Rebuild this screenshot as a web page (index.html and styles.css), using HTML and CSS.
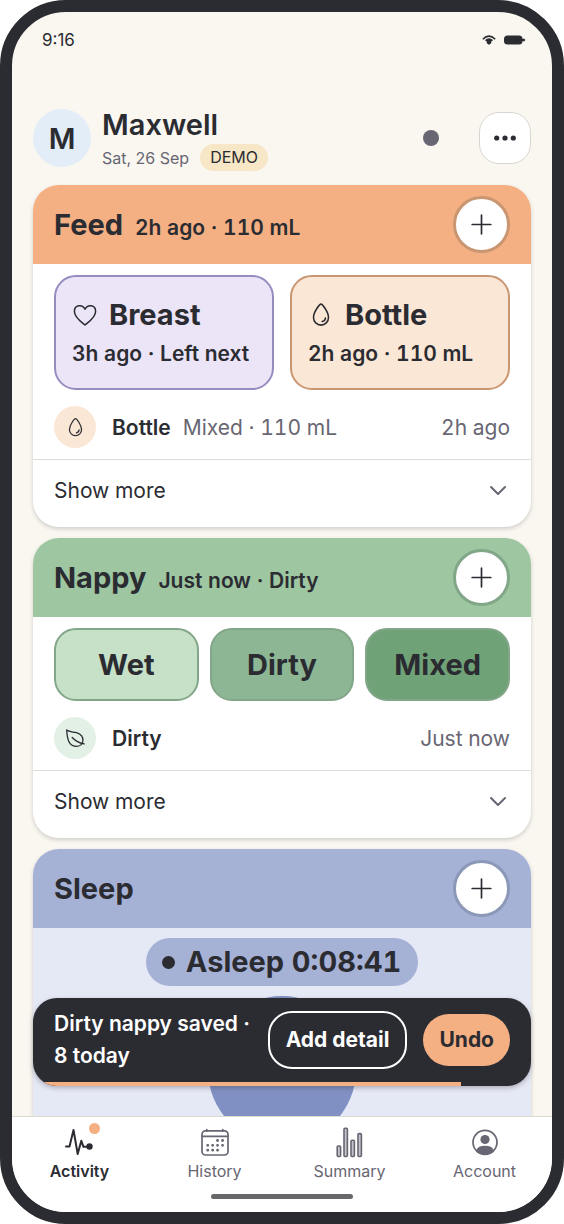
FILE: index.html
```html
<!DOCTYPE html>
<html lang="en-GB">
<head>
<meta charset="utf-8">
<meta name="viewport" content="width=device-width, initial-scale=1">
<title>Maxwell – Activity</title>
<link rel="stylesheet" href="styles.css">
</head>
<body>
<svg class="defs" width="0" height="0" aria-hidden="true">
  <symbol id="plus" viewBox="0 0 21 21"><path d="M10.500 1.200v18.600M1.200 10.500h18.600" fill="none" stroke="currentColor" stroke-width="1.700" stroke-linecap="round"/></symbol>
  <symbol id="chevron" viewBox="0 0 24 24"><path d="M5 8l7 7 7-7" fill="none" stroke="currentColor" stroke-width="2" stroke-linecap="round" stroke-linejoin="round"/></symbol>
  <symbol id="drop" viewBox="-1.500 -1 27 27"><path d="M12 1.200C10.500 1.200 4.200 9.400 4.200 15.200a7.800 7.800 0 0 0 15.600 0C19.800 9.400 13.500 1.200 12 1.200z" fill="none" stroke="currentColor" stroke-width="1.600"/><path d="M16.600 15.600a4 4 0 0 1-3.400 3.700" fill="none" stroke="currentColor" stroke-width="1.600" stroke-linecap="round"/></symbol>
</svg>
<div class="phone">
  <div class="status">
    <span class="clock">9:16</span>
    <span class="status-icons">
      <svg width="14" height="10" viewBox="0 0 14 10" aria-hidden="true"><path d="M0.800 4.200Q7-2 13.200 4.200" fill="none" stroke="currentColor" stroke-width="1.600"/><path d="M2.800 5.200Q7 1.200 11.200 5.200L9.500 6.200 9 8.500 7 9.800 5 8.500 4.500 6.200z" fill="currentColor"/></svg>
      <svg width="22" height="10" viewBox="0 0 22 10" aria-hidden="true"><rect x="0" y="0.500" width="18.500" height="9" rx="3.500" fill="currentColor"/><path d="M18 4h1.500V3l2 2-2 2V6H18z" fill="currentColor"/></svg>
    </span>
  </div>

  <main class="content">
    <header class="profile">
      <div class="avatar" aria-hidden="true">M</div>
      <div class="who">
        <h1 class="name">Maxwell</h1>
        <div class="meta"><span class="date">Sat, 26 Sep</span><span class="badge">DEMO</span></div>
      </div>
      <span class="sync"></span>
      <button class="more" type="button" aria-label="More">
        <svg width="24" height="6" viewBox="0 0 24 6" fill="currentColor" aria-hidden="true"><circle cx="3.700" cy="3" r="2.600"/><circle cx="12" cy="3" r="2.600"/><circle cx="20.300" cy="3" r="2.600"/></svg>
      </button>
    </header>

    <section class="card feed">
      <div class="card-head">
        <h2 class="title">Feed</h2><span class="summary">2h ago · 110 mL</span>
        <button class="add" type="button" aria-label="Add feed"><svg width="21" height="21" aria-hidden="true"><use href="#plus"/></svg></button>
      </div>
      <div class="choices pair">
        <button class="choice detail breast" type="button">
          <span class="choice-top"><svg width="26" height="26" viewBox="0 0 26 26" aria-hidden="true"><path d="M13 23C10 20.300 2.400 15.500 2.400 9.400 2.400 2.800 10.400 1.800 13 7.300 15.600 1.800 23.600 2.800 23.600 9.400 23.600 15.500 16 20.300 13 23z" fill="none" stroke="currentColor" stroke-width="1.500" stroke-linejoin="round"/></svg><span class="choice-name">Breast</span></span>
          <span class="choice-note">3h ago · Left next</span>
        </button>
        <button class="choice detail bottle" type="button">
          <span class="choice-top"><svg width="26" height="26" aria-hidden="true"><use href="#drop"/></svg><span class="choice-name">Bottle</span></span>
          <span class="choice-note">2h ago · 110 mL</span>
        </button>
      </div>
      <div class="entry">
        <span class="entry-icon"><svg width="21" height="21" aria-hidden="true"><use href="#drop"/></svg></span>
        <span class="entry-name">Bottle</span><span class="entry-note">Mixed · 110 mL</span><span class="entry-time">2h ago</span>
      </div>
      <button class="show-more" type="button"><span>Show more</span><svg width="24" height="24" aria-hidden="true"><use href="#chevron"/></svg></button>
    </section>

    <section class="card nappy">
      <div class="card-head">
        <h2 class="title">Nappy</h2><span class="summary">Just now · Dirty</span>
        <button class="add" type="button" aria-label="Add nappy"><svg width="21" height="21" aria-hidden="true"><use href="#plus"/></svg></button>
      </div>
      <div class="choices trio">
        <button class="choice wet" type="button">Wet</button>
        <button class="choice dirty" type="button">Dirty</button>
        <button class="choice mixed" type="button">Mixed</button>
      </div>
      <div class="entry">
        <span class="entry-icon"><svg width="20" height="20" viewBox="0 0 20 20" fill="none" stroke="currentColor" stroke-width="1.300" stroke-linecap="round" stroke-linejoin="round" aria-hidden="true"><path d="M1.700 2C4 4.200 8 3.700 11.500 4.700 15.800 6 18.300 9 17.900 13c-.4 3.600-3.500 5.500-7 5.300C3.500 17.800 2.200 10.500 1.700 2z"/><path d="M7.200 9.500c2.500 2.800 5.800 5.200 12 6.400"/></svg></span>
        <span class="entry-name">Dirty</span><span class="entry-time">Just now</span>
      </div>
      <button class="show-more" type="button"><span>Show more</span><svg width="24" height="24" aria-hidden="true"><use href="#chevron"/></svg></button>
    </section>

    <section class="card sleep">
      <div class="card-head">
        <h2 class="title">Sleep</h2>
        <button class="add" type="button" aria-label="Add sleep"><svg width="21" height="21" aria-hidden="true"><use href="#plus"/></svg></button>
      </div>
      <div class="sleep-body">
        <div class="timer"><span class="timer-dot"></span>Asleep 0:08:41</div>
        <button class="orb" type="button" aria-label="Stop sleep timer"></button>
      </div>
    </section>

    <div class="toast" role="status">
      <span class="toast-text">Dirty nappy saved · 8 today</span>
      <button class="toast-detail" type="button">Add detail</button>
      <button class="toast-undo" type="button">Undo</button>
      <span class="toast-progress"></span>
    </div>
  </main>

  <nav class="tabs">
    <a class="tab active" href="#activity">
      <span class="tab-icon"><svg width="32" height="32" viewBox="0 0 32 32" fill="none" stroke="currentColor" stroke-width="2" stroke-linecap="round" stroke-linejoin="round" aria-hidden="true"><path d="M3 20.500H6.500L10.500 4l4.200 24L18.300 14.800l2.200 6H26"/><circle cx="26.500" cy="20.500" r="2.200" fill="currentColor"/></svg><span class="dot"></span></span>
      Activity
    </a>
    <a class="tab" href="#history">
      <span class="tab-icon"><svg width="32" height="32" viewBox="0 0 32 32" fill="none" stroke="currentColor" stroke-width="1.700" stroke-linecap="round" aria-hidden="true"><rect x="3" y="4.800" width="26" height="24.200" rx="3.500"/><path d="M3 10.300h26M7.800 3.500v1.500M23.800 3.500v1.500"/><path d="M18.500 14.500h.1M23.500 14.500h.1M8.700 19.300h.1M13.600 19.300h.1M18.500 19.300h.1M23.500 19.300h.1M8.700 24.200h.1M13.600 24.200h.1M18.500 24.200h.1" stroke-width="2.800"/></svg></span>
      History
    </a>
    <a class="tab" href="#summary">
      <span class="tab-icon"><svg width="32" height="32" viewBox="0 0 32 32" fill="#c4c4cc" stroke="currentColor" stroke-width="1.600" aria-hidden="true"><rect x="4.200" y="20" width="3.400" height="10.500" rx="1"/><rect x="11" y="2.300" width="3.400" height="28.200" rx="1"/><rect x="18" y="14.300" width="3.400" height="16.200" rx="1"/><rect x="25" y="7.600" width="3.400" height="22.900" rx="1"/></svg></span>
      Summary
    </a>
    <a class="tab" href="#account">
      <span class="tab-icon"><svg width="32" height="32" viewBox="0 0 32 32" aria-hidden="true"><circle cx="16" cy="16.300" r="12" fill="none" stroke="currentColor" stroke-width="1.700"/><circle cx="16" cy="13.500" r="4.600" fill="currentColor"/><path d="M7.300 24Q9 19.700 16 19.700T24.700 24Q21 28.500 16 28.500T7.300 24z" fill="currentColor"/></svg></span>
      Account
    </a>
    <span class="home-bar"></span>
  </nav>
</div>
</body>
</html>
```
FILE: styles.css
```css
:root {
  --ink: #2b2c32;
  --muted: #686672;
  --cream: #faf7f1;
}

* { box-sizing: border-box; }

body {
  margin: 0;
  background: #fff;
  color: var(--ink);
  font-family: Inter, "Liberation Sans", sans-serif;
  font-size: 21px;
}

button {
  margin: 0;
  padding: 0;
  border: 0;
  background: none;
  color: inherit;
  font: inherit;
  font-variant-numeric: inherit;
}

svg { display: block; flex: none; }
.defs { position: absolute; }

.phone {
  display: flex;
  flex-direction: column;
  height: 100vh;
  overflow: hidden;
  border: 12px solid var(--ink);
  border-radius: 66px;
  background: var(--cream);
}

.status {
  display: flex;
  flex: none;
  align-items: center;
  justify-content: space-between;
  padding: 16px 26px 0 30px;
}

.clock { font-size: 17px; line-height: 24px; }
.status-icons { display: flex; align-items: center; gap: 8px; }

.content {
  position: relative;
  display: flex;
  flex: 1;
  flex-direction: column;
  gap: 11px;
  min-height: 0;
  padding: 53px 21px 0;
  overflow: hidden;
}

.profile {
  display: flex;
  flex: none;
  align-items: center;
  margin-bottom: 3px;
}

.avatar {
  display: grid;
  place-items: center;
  width: 58px;
  height: 58px;
  border-radius: 50%;
  background: #e2edf7;
  font-size: 29px;
  font-weight: 600;
}

.who { flex: 1; margin-left: 11px; }
.name { margin: 0; font-size: 29px; font-weight: 600; line-height: 39px; }
.meta { display: flex; align-items: center; gap: 11px; color: var(--muted); font-size: 16px; }
.badge {
  padding: 0 10px;
  border-radius: 14px;
  background: #f7e7c6;
  color: var(--ink);
  line-height: 27px;
}

.sync { width: 16px; height: 16px; border-radius: 50%; background: var(--muted); }

.more {
  display: grid;
  place-items: center;
  width: 52px;
  height: 52px;
  margin-left: 40px;
  border: 1px solid #d9d5d0;
  border-radius: 20px;
  background: #fff;
}

.card {
  flex: none;
  overflow: hidden;
  border-radius: 26px;
  background: #fff;
  box-shadow: 0 2px 4px rgb(44 44 50 / 20%);
  font-variant-numeric: tabular-nums;
}

.card-head {
  display: flex;
  align-items: baseline;
  gap: 12px;
  padding: 11px 21px;
}

.feed .card-head { background: #f4b083; }
.nappy .card-head { background: #9dc6a1; }
.sleep .card-head { background: #a6b1d6; }

.title { margin: 0; font-size: 29px; font-weight: 700; line-height: 57px; }
.summary { font-weight: 600; }

.add {
  display: grid;
  align-self: center;
  place-items: center;
  width: 57px;
  height: 57px;
  margin-left: auto;
  border: 3px solid #c99671;
  border-radius: 50%;
  background: #fff;
}

.nappy .add { border-color: #82a688; }
.sleep .add { border-color: #8c98b8; }

.choices { display: grid; padding: 11px 21px 16px; }
.pair { grid-template-columns: 1fr 1fr; gap: 16px; }
.trio { grid-template-columns: 1fr 1fr 1fr; gap: 11px; }

.choice {
  border: 2px solid #82a688;
  border-radius: 22px;
  font-size: 29px;
  font-weight: 700;
  line-height: 69px;
}

.detail {
  padding: 17px 16px 16px;
  line-height: 41px;
  text-align: left;
}

.breast { border-color: #968cc0; background: #ebe5f7; }
.bottle { border-color: #c99671; background: #fbe7d6; }
.wet { background: #c7e0c8; }
.dirty { background: #8db794; }
.mixed { background: #70a278; }

.choice-top { display: flex; align-items: center; gap: 11px; }
.choice-note { display: block; font-size: 21px; font-weight: 600; line-height: 37px; }

.entry { display: flex; align-items: center; padding: 0 21px 11px; }
.entry-icon {
  display: grid;
  place-items: center;
  width: 42px;
  height: 42px;
  margin-right: 16px;
  border-radius: 50%;
  background: #fbe7d6;
}
.nappy .entry-icon { background: #e2f0e6; }
.entry-name { margin-right: 12px; font-weight: 600; }
.entry-note { color: var(--muted); }
.entry-time { margin-left: auto; color: var(--muted); }

.show-more {
  display: flex;
  align-items: center;
  justify-content: space-between;
  width: 100%;
  padding: 0 21px 5px;
  border-top: 1px solid #dedbd9;
  line-height: 62px;
}
.show-more svg { color: var(--muted); }

.sleep-body {
  display: flex;
  flex-direction: column;
  align-items: center;
  gap: 10px;
  padding: 10px 21px 32px;
  background: #e5e8f5;
}

.timer {
  display: flex;
  align-items: center;
  gap: 11px;
  padding: 0 17px 0 16px;
  border-radius: 24px;
  background: #a6b1d6;
  font-size: 29px;
  font-weight: 700;
  line-height: 48px;
}
.timer-dot { width: 13px; height: 13px; border-radius: 50%; background: var(--ink); }
.orb { width: 148px; height: 148px; border-radius: 50%; background: #8090c2; }

.toast {
  position: absolute;
  right: 21px;
  bottom: 30px;
  left: 21px;
  display: flex;
  align-items: center;
  gap: 16px;
  padding: 10px 21px 14px;
  overflow: hidden;
  border-radius: 24px;
  background: var(--ink);
  box-shadow: 0 2px 5px rgb(44 44 50 / 30%);
  color: #fff;
  font-weight: 600;
}

.toast-text { flex: 1; line-height: 32px; }
.toast-detail {
  padding: 0 16px;
  border: 2px solid #fff;
  border-radius: 24px;
  font-weight: 700;
  line-height: 54px;
}
.toast-undo {
  padding: 0 16px;
  border-radius: 26px;
  background: #f4b083;
  color: var(--ink);
  font-weight: 700;
  line-height: 52px;
}
.toast-progress {
  position: absolute;
  bottom: 0;
  left: 0;
  width: 86%;
  height: 4px;
  background: #f4b083;
}

.tabs {
  display: grid;
  flex: none;
  grid-template-columns: repeat(4, 1fr);
  justify-items: center;
  padding: 9px 0 13px;
  border-top: 1px solid #dedbd2;
  background: #fff;
}

.tab {
  display: flex;
  flex-direction: column;
  align-items: center;
  color: var(--muted);
  font-size: 16px;
  line-height: 26px;
  text-decoration: none;
}
.tab.active { color: var(--ink); font-weight: 600; }
.tab-icon { position: relative; }
.dot {
  position: absolute;
  top: -3px;
  right: -5px;
  width: 11px;
  height: 11px;
  border-radius: 50%;
  background: #f4b083;
}

.home-bar {
  grid-column: 1 / -1;
  width: 142px;
  height: 5px;
  margin-top: 10px;
  border-radius: 3px;
  background: #68686a;
}
```
